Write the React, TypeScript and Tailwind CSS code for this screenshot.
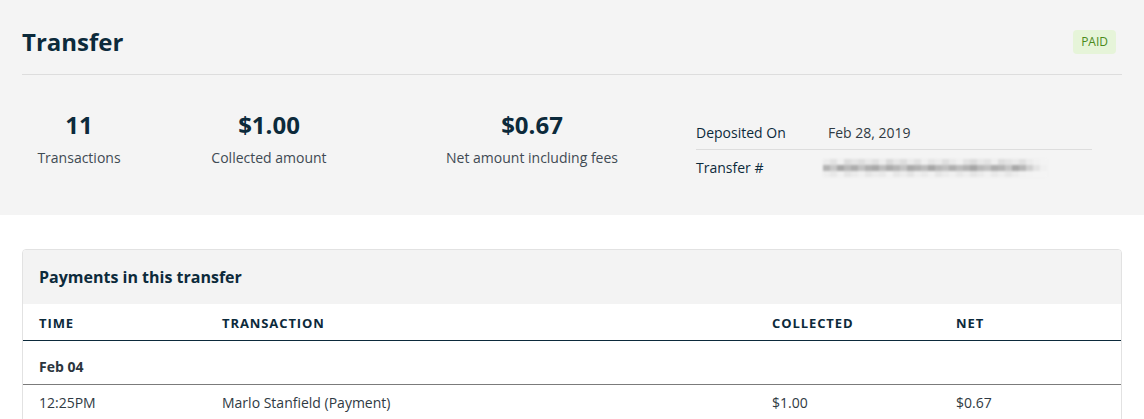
import React from "react";

const stats = [
  { value: "11", label: "Transactions", width: "w-[114px]" },
  { value: "$1.00", label: "Collected amount", width: "w-[266px]" },
  { value: "$0.67", label: "Net amount including fees", width: "w-[260px]" },
];

// pixelated, blurred transfer id
const topRow = [
  "bg-[#ececec]", "bg-[#e2e2e2]", "bg-[#f0f0f0]", "bg-[#dcdcdc]", "bg-[#e4e4e4]", "bg-[#dedede]", "bg-[#e8e8e8]", "bg-[#e0e0e0]",
  "bg-[#ededed]", "bg-[#dadada]", "bg-[#e6e6e6]", "bg-[#dddddd]", "bg-[#eaeaea]", "bg-[#e1e1e1]", "bg-[#efefef]", "bg-[#e5e5e5]",
  "bg-[#ebebeb]", "bg-[#dfdfdf]", "bg-[#e9e9e9]", "bg-[#f0f0f0]", "bg-[#e3e3e3]", "bg-[#dbdbdb]", "bg-[#e7e7e7]", "bg-[#e2e2e2]",
  "bg-[#eeeeee]", "bg-[#dedede]", "bg-[#e4e4e4]", "bg-[#e9e9e9]", "bg-[#e0e0e0]", "bg-[#ececec]", "bg-[#f1f1f1]", "bg-[#f3f3f3]",
];
const midRow = [
  "bg-[#b4b4b4]", "bg-[#c8c8c8]", "bg-[#a8a8a8]", "bg-[#bababa]", "bg-[#adadad]", "bg-[#c2c2c2]", "bg-[#b0b0b0]", "bg-[#a9a9a9]",
  "bg-[#bebebe]", "bg-[#acacac]", "bg-[#b6b6b6]", "bg-[#c4c4c4]", "bg-[#aaaaaa]", "bg-[#b2b2b2]", "bg-[#bcbcbc]", "bg-[#a7a7a7]",
  "bg-[#b8b8b8]", "bg-[#c0c0c0]", "bg-[#afafaf]", "bg-[#bdbdbd]", "bg-[#b3b3b3]", "bg-[#a6a6a6]", "bg-[#b9b9b9]", "bg-[#c1c1c1]",
  "bg-[#aeaeae]", "bg-[#b5b5b5]", "bg-[#c6c6c6]", "bg-[#a9a9a9]", "bg-[#b7b7b7]", "bg-[#d0d0d0]", "bg-[#e4e4e4]", "bg-[#f0f0f0]",
];
const botRow = [
  "bg-[#eeeeee]", "bg-[#e8e8e8]", "bg-[#f1f1f1]", "bg-[#e5e5e5]", "bg-[#ebebeb]", "bg-[#f0f0f0]", "bg-[#e6e6e6]", "bg-[#ececec]",
  "bg-[#e9e9e9]", "bg-[#f2f2f2]", "bg-[#e7e7e7]", "bg-[#ededed]", "bg-[#e4e4e4]", "bg-[#efefef]", "bg-[#eaeaea]", "bg-[#f1f1f1]",
  "bg-[#e6e6e6]", "bg-[#ececec]", "bg-[#f0f0f0]", "bg-[#e8e8e8]", "bg-[#eeeeee]", "bg-[#e5e5e5]", "bg-[#ebebeb]", "bg-[#f1f1f1]",
  "bg-[#e9e9e9]", "bg-[#efefef]", "bg-[#e7e7e7]", "bg-[#ededed]", "bg-[#f2f2f2]", "bg-[#f3f3f3]", "bg-[#f4f4f4]", "bg-[#f4f4f4]",
];

const BlurredId = () => (
  <div className="flex flex-col blur-[1px] -ml-[5px]">
    {[topRow, midRow, botRow].map((row, r) => (
      <div key={r} className="flex">
        {row.map((c, i) => (
          <div key={i} className={`w-[7px] h-[6px] ${c}`} />
        ))}
      </div>
    ))}
  </div>
);

const cols = "grid grid-cols-[183px_550px_184px_1fr] px-4";

export default function App() {
  return (
    <div className="w-[1144px] h-[419px] overflow-hidden bg-white font-['Open_Sans',sans-serif] text-[#0c2a3b]">
      {/* Summary panel */}
      <div className="bg-[#f4f4f4] h-[215px] px-[22px]">
        <div className="flex items-center justify-between pt-[26px] pb-[16px] border-b border-[#dddddd]">
          <h1 className="text-[24px] leading-[32px] font-bold">Transfer</h1>
          <span className="mr-[6px] px-[8px] py-[4px] rounded-[4px] bg-[#e6f4d9] text-[#4b8a1b] text-[12px] leading-[16px]">
            PAID
          </span>
        </div>

        <div className="flex items-start pt-[34px]">
          {stats.map((s) => (
            <div key={s.label} className={`${s.width} flex flex-col items-center`}>
              <div className="text-2xl leading-[32px] font-bold">{s.value}</div>
              <div className="mt-[7px] text-sm leading-5 text-[#3f4a53]">{s.label}</div>
            </div>
          ))}

          <div className="ml-[34px] mt-[7px] w-[396px] text-sm text-[#0c2a3b]">
            <div className="flex items-center h-[34px] border-b border-[#dddddd]">
              <span className="w-[132px]">Deposited On</span>
              <span className="text-[#2f3a43]">Feb 28, 2019</span>
            </div>
            <div className="flex items-center h-[35px]">
              <span className="w-[132px]">Transfer #</span>
              <BlurredId />
            </div>
          </div>
        </div>
      </div>

      {/* Payments card */}
      <div className="mx-[22px] mt-[34px] border border-[#e2e2e2] rounded-[4px] overflow-hidden">
        <div className="bg-[#f3f3f3] h-[54px] flex items-center px-4">
          <h2 className="text-base font-bold">Payments in this transfer</h2>
        </div>

        <div className={`${cols} h-[37px] pt-[3px] items-center border-b border-[#0c2a3b] text-[13px] font-bold tracking-[0.07em]`}>
          <span>TIME</span>
          <span>TRANSACTION</span>
          <span>COLLECTED</span>
          <span>NET</span>
        </div>

        <div className="px-4 pt-[16px] pb-[7px] border-b border-[#7b7b7b] text-[14px] leading-5 font-bold text-[#2b353d]">
          Feb 04
        </div>

        <div className={`${cols} pt-[8px] pb-[10px] text-sm leading-5 text-[#2f3a43]`}>
          <span>12:25PM</span>
          <span>Marlo Stanfield (Payment)</span>
          <span>$1.00</span>
          <span>$0.67</span>
        </div>
      </div>
    </div>
  );
}
